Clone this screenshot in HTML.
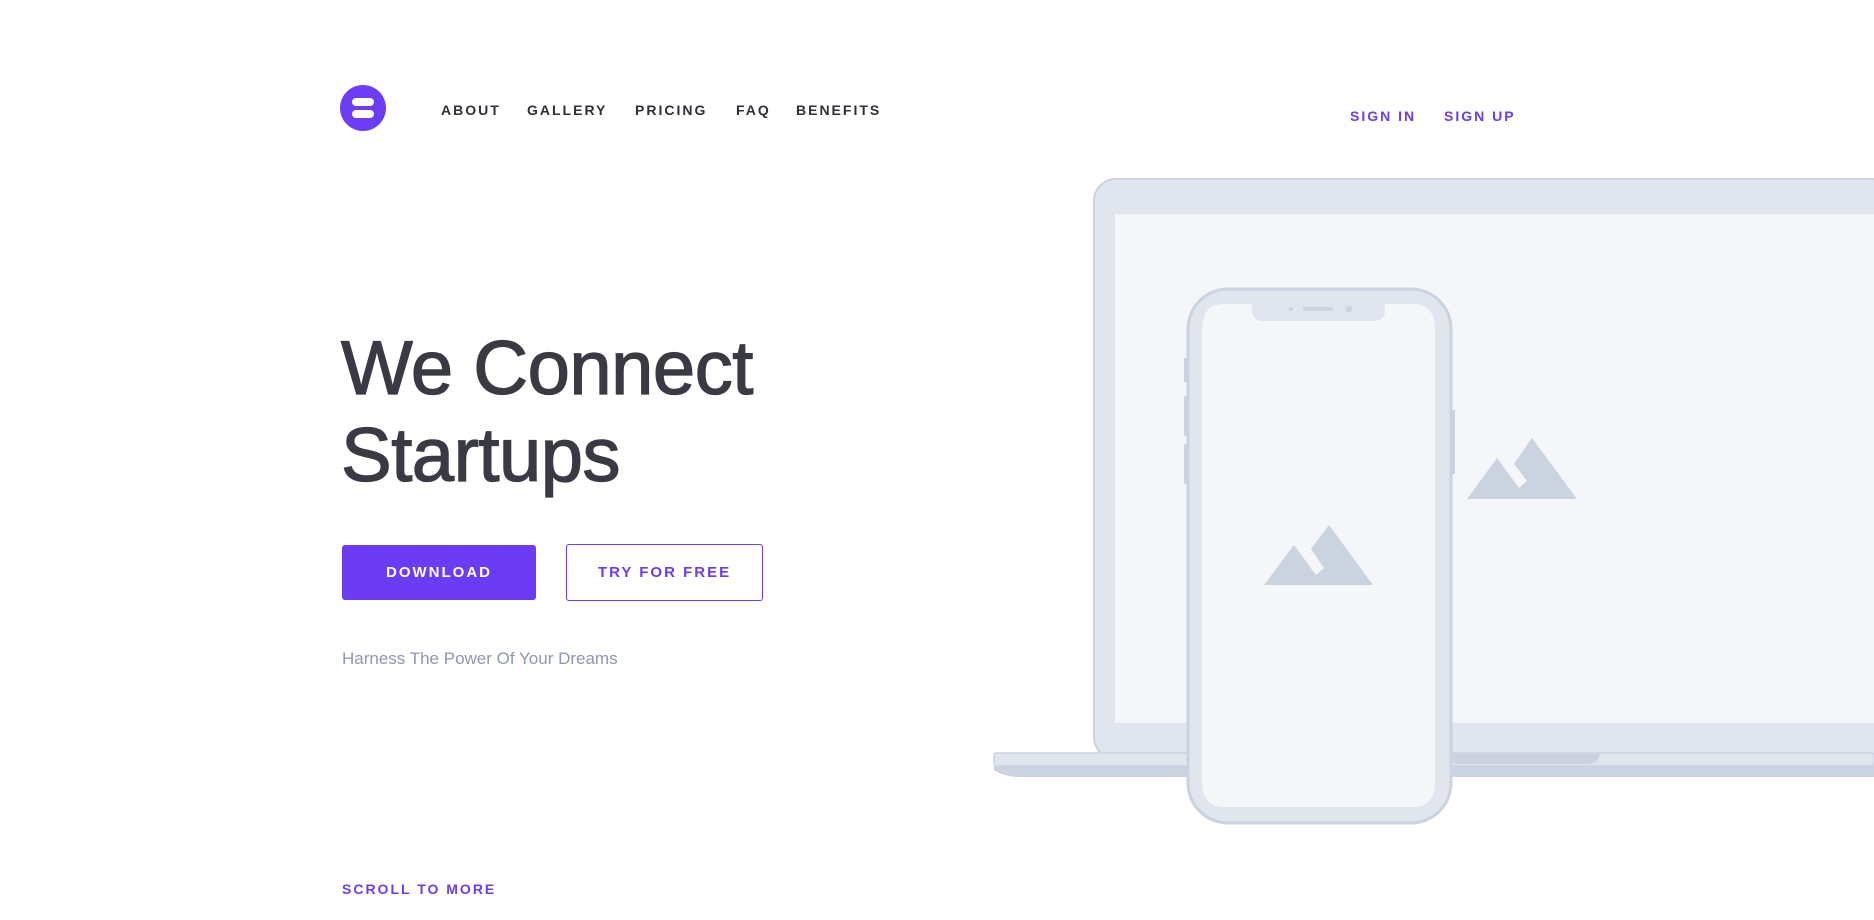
<!DOCTYPE html>
<html><head><meta charset="utf-8"><style>
*{margin:0;padding:0;box-sizing:border-box}
body{width:1874px;height:920px;background:#fff;font-family:"Liberation Sans",sans-serif;position:relative;overflow:hidden}
.a{position:absolute;white-space:nowrap}
.nav{font-size:14px;letter-spacing:2px;color:#2f3037;font-weight:bold;top:102px}
.pur{color:#6c3cf4}
h1{position:absolute;left:341px;top:325px;font-size:76px;line-height:87px;font-weight:normal;color:#393a44;-webkit-text-stroke:1.3px #393a44;letter-spacing:-0.5px}
.btn{position:absolute;display:flex;align-items:center;justify-content:center;font-size:15px;letter-spacing:2px;font-weight:bold;border-radius:3px}
</style></head><body>
<svg class="a" style="left:340px;top:85px" width="46" height="46"><circle cx="23" cy="23" r="23" fill="#6d3df5"/><rect x="12" y="13" width="22" height="8" rx="4" fill="#fff"/><rect x="12" y="25" width="22" height="8" rx="4" fill="#fff"/></svg>
<div class="a nav" style="left:441px">ABOUT</div>
<div class="a nav" style="left:527px">GALLERY</div>
<div class="a nav" style="left:635px">PRICING</div>
<div class="a nav" style="left:736px">FAQ</div>
<div class="a nav" style="left:796px">BENEFITS</div>
<div class="a nav pur" style="left:1350px;top:108px">SIGN IN</div>
<div class="a nav pur" style="left:1444px;top:108px">SIGN UP</div>
<h1>We Connect<br>Startups</h1>
<div class="btn" style="left:342px;top:545px;width:194px;height:55px;background:#6c3cf4;color:#fff">DOWNLOAD</div>
<div class="btn" style="left:566px;top:544px;width:197px;height:57px;border:1.5px solid #6c3cf4;color:#6c3cf4">TRY FOR FREE</div>
<div class="a" style="left:342px;top:649px;font-size:17px;color:#8d96b3">Harness The Power Of Your Dreams</div>
<div class="a pur" style="left:342px;top:881px;font-size:14px;letter-spacing:2px;font-weight:bold">SCROLL TO MORE</div>
<svg class="a" style="left:0;top:0" width="1874" height="920">
<rect x="1094" y="179" width="800" height="580" rx="22" fill="#e1e5ee" stroke="#cbd2e0" stroke-width="2"/>
<rect x="1115" y="214" width="780" height="509" fill="#f5f6fa"/>
<path d="M994 753 H1874 V777 H1020 Q1004 777 994 770 Z" fill="#cbd2e0"/>
<rect x="994" y="753" width="880" height="13" rx="2" fill="#e1e5ee" stroke="#cbd2e0" stroke-width="1.5"/>
<path d="M1446 754 H1600 Q1598 764 1588 764 H1458 Q1448 764 1446 754Z" fill="#cbd2e0"/>
<polygon points="1467,499 1497,458 1519,488 1527,481 1514,464 1532,438 1577,499" fill="#cbd2e0"/>
<rect x="1184" y="358" width="5" height="24" fill="#cbd2e0"/>
<rect x="1184" y="396" width="5" height="40" fill="#cbd2e0"/>
<rect x="1184" y="444" width="5" height="40" fill="#cbd2e0"/>
<rect x="1450" y="410" width="5" height="64" fill="#cbd2e0"/>
<rect x="1188" y="289" width="263" height="534" rx="40" fill="#e1e5ee" stroke="#cbd2e0" stroke-width="3"/>
<path d="M1224 304 H1252 V310 Q1252 321 1264 321 H1373 Q1385 321 1385 310 V304 H1413 Q1435 304 1435 330 V782 Q1435 807 1413 807 H1224 Q1202 807 1202 782 V330 Q1202 304 1224 304Z" fill="#f5f6fa"/>
<circle cx="1291" cy="309" r="2" fill="#cbd2e0"/><rect x="1303" y="307" width="30" height="4" rx="2" fill="#cbd2e0"/><circle cx="1349" cy="309" r="3.5" fill="#cbd2e0"/>
<polygon points="1264,585 1294,545 1316,575 1324,568 1311,549 1329,525 1373,585" fill="#cbd2e0"/>
</svg>
</body></html>
